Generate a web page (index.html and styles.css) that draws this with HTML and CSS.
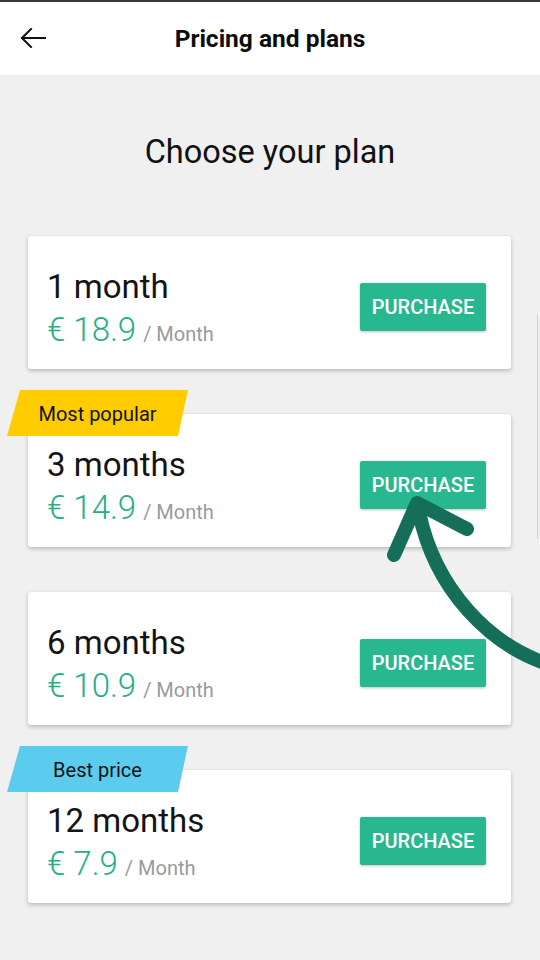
FILE: index.html
```html
<!DOCTYPE html>
<html lang="en">
<head>
<meta charset="utf-8">
<title>Pricing and plans</title>
<link rel="stylesheet" href="styles.css">
</head>
<body>
<div class="screen">
  <header class="topbar">
    <svg class="back" width="26" height="20" viewBox="0 0 26 20" aria-hidden="true">
      <path d="M25 10H2M11 1L2 10l9 9" fill="none" stroke="#111" stroke-width="2" stroke-linecap="square"/>
    </svg>
    <h1 class="topbar-title">Pricing and plans</h1>
  </header>

  <main class="content">
    <h2 class="heading">Choose your plan</h2>

    <div class="plans">
      <div class="card">
        <div class="info">
          <div class="plan-name">1 month</div>
          <div class="price"><span class="amount">€ 18.9</span><span class="per">/ Month</span></div>
        </div>
        <button class="buy">PURCHASE</button>
      </div>

      <div class="card">
        <div class="badge badge-yellow">Most popular</div>
        <div class="info">
          <div class="plan-name">3 months</div>
          <div class="price"><span class="amount">€ 14.9</span><span class="per">/ Month</span></div>
        </div>
        <button class="buy">PURCHASE</button>
      </div>

      <div class="card">
        <div class="info">
          <div class="plan-name">6 months</div>
          <div class="price"><span class="amount">€ 10.9</span><span class="per">/ Month</span></div>
        </div>
        <button class="buy">PURCHASE</button>
      </div>

      <div class="card">
        <div class="badge badge-blue">Best price</div>
        <div class="info">
          <div class="plan-name">12 months</div>
          <div class="price"><span class="amount">€ 7.9</span><span class="per">/ Month</span></div>
        </div>
        <button class="buy">PURCHASE</button>
      </div>
    </div>
  </main>

  <div class="edge"></div>

  <svg class="pointer" width="540" height="960" viewBox="0 0 540 960" aria-hidden="true">
    <path d="M548 664C490 645 435 590 419 512" fill="none" stroke="#146e58" stroke-width="14" stroke-linecap="round"/>
    <path d="M394 555L417 503L467 529" fill="none" stroke="#146e58" stroke-width="14" stroke-linecap="round" stroke-linejoin="round"/>
  </svg>
</div>
</body>
</html>
```

FILE: styles.css
```css
* { box-sizing: border-box; }

html, body {
  margin: 0;
  padding: 0;
}

body {
  background: #f0f0f0;
  font-family: Roboto, "Noto Sans", "Liberation Sans", sans-serif;
  color: #111;
}

.screen {
  position: relative;
  width: 540px;
  height: 960px;
  overflow: hidden;
  background: #f0f0f0;
}

.topbar {
  position: relative;
  height: 75px;
  background: #fff;
  border-top: 2px solid #3a3a3a;
  display: flex;
  align-items: center;
  justify-content: center;
}

.back {
  position: absolute;
  left: 20px;
  top: 26px;
}

.topbar-title {
  margin: 0;
  font-size: 24.5px;
  font-weight: 700;
  color: #0d0d0d;
  line-height: 1;
  padding-top: 2px;
}

.content {
  padding-top: 58px;
}

.heading {
  margin: 0;
  text-align: center;
  font-size: 32.5px;
  font-weight: 400;
  line-height: 38px;
  color: #111;
}

.plans {
  margin-top: 65px;
  display: flex;
  flex-direction: column;
  gap: 45px;
  padding: 0 29px 0 28px;
}

.card {
  position: relative;
  height: 133px;
  background: #fff;
  border-radius: 3px;
  box-shadow: 0 2px 4px rgba(0, 0, 0, 0.22), 0 0 1px rgba(0, 0, 0, 0.12);
  display: flex;
  align-items: flex-start;
  justify-content: space-between;
  padding: 33px 25px 0 19px;
}

.info {
  display: flex;
  flex-direction: column;
}

.plan-name {
  font-size: 33px;
  line-height: 36px;
  font-weight: 400;
  color: #141414;
}

.price {
  margin-top: 7px;
  line-height: 36px;
  white-space: nowrap;
}

.amount {
  font-size: 33px;
  font-weight: 300;
  color: #22b088;
}

.per {
  font-size: 20px;
  color: #9a9a9a;
  margin-left: 7px;
}

.buy {
  margin-top: 14px;
  width: 126px;
  height: 48px;
  border: 0;
  border-radius: 2px;
  background: #28b890;
  color: #fff;
  font-family: Roboto, "Noto Sans", "Liberation Sans", sans-serif;
  font-size: 20px;
  font-weight: 500;
  box-shadow: 0 1px 3px rgba(0, 0, 0, 0.25);
  padding: 0;
}

.badge {
  position: absolute;
  top: -24px;
  left: -21px;
  width: 181px;
  height: 46px;
  padding-top: 2px;
  line-height: 44px;
  text-align: center;
  font-size: 20px;
  color: #111;
  clip-path: polygon(13px 0, 100% 0, calc(100% - 10px) 100%, 0 100%);
}

.badge-yellow { background: #ffcc00; }
.badge-blue { background: #5bcbee; }

.edge {
  position: absolute;
  right: 2px;
  top: 315px;
  width: 1px;
  height: 224px;
  background: #cfcfcf;
}

.pointer {
  position: absolute;
  left: 0;
  top: 0;
  pointer-events: none;
}
```
